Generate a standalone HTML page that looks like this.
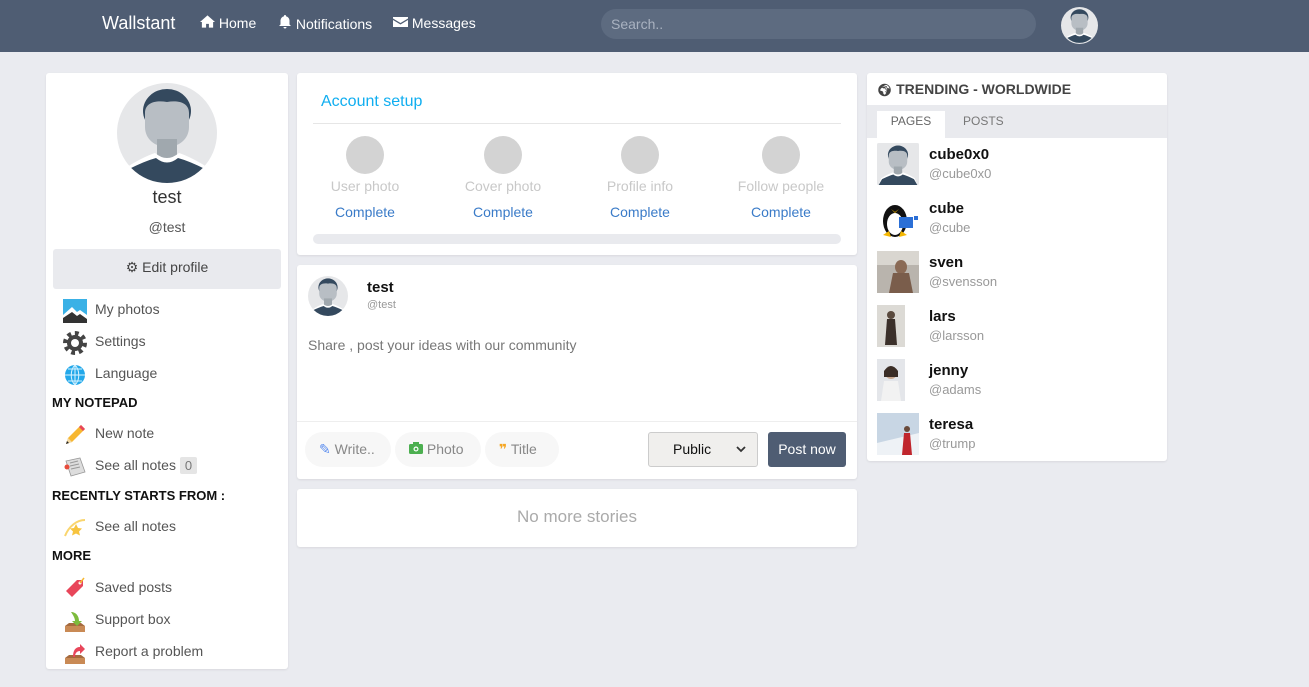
<!DOCTYPE html>
<html><head><meta charset="utf-8"><style>
*{box-sizing:border-box;margin:0;padding:0}
body{width:1309px;height:687px;background:#eaebf0;font-family:"Liberation Sans",sans-serif;position:relative;overflow:hidden;color:#555}
.a{position:absolute}
.nav{left:0;top:0;width:1309px;height:52px;background:#4f5d73}
.nav .t{color:#fff;font-size:14px;top:15px}
.card{background:#fff;border-radius:3px;box-shadow:0 1px 2px rgba(0,0,0,.08)}
.mi{font-size:14px;color:#555;left:49px}
.ic{left:17px;width:24px;height:24px}
.hd{font-size:13px;font-weight:bold;color:#111;left:6px}
.step{text-align:center;width:140px}
.step .c{width:38px;height:38px;border-radius:50%;background:#d3d3d3;margin:0 auto}
.step .l{color:#c8c8c8;font-size:14px;margin-top:4px}
.step .k{color:#3a7bc8;font-size:14px;margin-top:10px}
.pill{top:432px;height:35px;border-radius:18px;background:#f7f7f7;font-size:14px;color:#888;line-height:35px}
.tr .n{font-size:15px;font-weight:bold;color:#111}
.tr .u{font-size:13px;color:#999;margin-top:3px}
</style></head><body>
<svg width="0" height="0" style="position:absolute"><defs>
<g id="av"><ellipse cx="50" cy="28" rx="24" ry="22" fill="#34495e"/><path d="M28 30C28 20 38 17 50 19C62 17 72 20 72 30L72 44C72 56 62 64 50 64C38 64 28 56 28 44Z" fill="#b8bec4"/><rect x="40" y="56" width="20" height="20" fill="#a0a8ae"/><path d="M4 100L10 84Q26 74 38 70Q50 80 62 70Q74 74 90 84L96 100Z" fill="#fff"/><path d="M4 100L12 86Q28 78 39 75Q50 84 61 75Q72 78 88 86L96 100Z" fill="#34495e"/></g>
</defs></svg>
<div class="a nav">
<div class="a t" style="left:102px;font-size:18px;top:13px">Wallstant</div>
<div class="a t" style="left:200px"><svg width="15" height="13" viewBox="0 0 16 13"><path d="M8 0L0 7h2v6h4.5V9h3v4H14V7h2z" fill="#fff"/></svg> Home</div>
<div class="a t" style="left:278px"><svg width="14" height="14" viewBox="0 0 14 14"><path d="M7 0a1 1 0 0 1 1 1.2A4.5 4.5 0 0 1 11.5 6v3.5L13 11H1l1.5-1.5V6A4.5 4.5 0 0 1 6 1.2 1 1 0 0 1 7 0zM5.5 12h3a1.5 1.5 0 0 1-3 0z" fill="#fff"/></svg> Notifications</div>
<div class="a t" style="left:393px"><svg width="15" height="12" viewBox="0 0 15 12"><path d="M0 1h15v1.5L7.5 7 0 2.5zM0 4l7.5 4.5L15 4v7H0z" fill="#fff"/></svg> Messages</div>
<div class="a" style="left:601px;top:9px;width:435px;height:30px;border-radius:15px;background:#5d6b80;color:#a9b2c0;font-size:14px;line-height:30px;padding-left:10px">Search..</div>
<svg class="a" style="left:1061px;top:7px" width="37" height="37" viewBox="0 0 100 100"><circle cx="50" cy="50" r="50" fill="#e6e7e9"/><clipPath id="c0"><circle cx="50" cy="50" r="47"/></clipPath><g clip-path="url(#c0)"><use href="#av"/></g></svg>
</div>

<!-- left -->
<div class="a card" style="left:46px;top:73px;width:242px;height:596px">
<svg class="a" style="left:71px;top:10px" width="100" height="100" viewBox="0 0 100 100"><circle cx="50" cy="50" r="50" fill="#e6e7e9"/><clipPath id="c1"><circle cx="50" cy="50" r="50"/></clipPath><g clip-path="url(#c1)"><use href="#av"/></g></svg>
<div class="a" style="left:0;width:242px;top:114px;text-align:center;font-size:18px;color:#333">test</div>
<div class="a" style="left:0;width:242px;top:146px;text-align:center;font-size:14px;color:#555">@test</div>
<div class="a" style="left:7px;top:176px;width:228px;height:40px;background:#e9eaee;border-radius:3px;text-align:center;line-height:36px;font-size:14px;color:#444">⚙ Edit profile</div>
<svg class="a ic" style="top:226px" viewBox="0 0 24 24"><rect width="24" height="24" fill="#3ab1e6"/><path d="M0 24V16L9 8l5 5 3-2 7 5v8z" fill="#fff"/><path d="M0 24v-5l9-6 5 4 3-2 7 5v4z" fill="#333"/></svg>
<div class="a mi" style="top:228px">My photos</div>
<svg class="a ic" style="top:258px" viewBox="0 0 24 24"><circle cx="12" cy="12" r="9" fill="none" stroke="#444" stroke-width="6" stroke-dasharray="3.5 3.5"/><circle cx="12" cy="12" r="8" fill="#444"/><circle cx="12" cy="12" r="4" fill="#fff"/></svg>
<div class="a mi" style="top:260px">Settings</div>
<svg class="a ic" style="top:290px" viewBox="0 0 24 24"><circle cx="12" cy="12" r="10" fill="#23a8ea"/><path d="M2 12h20M12 2v20M5 6h14M5 18h14M12 2c-5 5-5 15 0 20M12 2c5 5 5 15 0 20" stroke="#d8f3ff" fill="none"/></svg>
<div class="a mi" style="top:292px">Language</div>
<div class="a hd" style="top:322px">MY NOTEPAD</div>
<svg class="a ic" style="top:350px" viewBox="0 0 24 24"><path d="M3 21l2-6L18 2l4 4L9 19z" fill="#f7b731"/><path d="M18 2l4 4-2 2-4-4z" fill="#e8465a"/><path d="M3 21l2-6 4 4z" fill="#f3d9a5"/><path d="M3 21l1-3 2 2z" fill="#222"/></svg>
<div class="a mi" style="top:352px">New note</div>
<svg class="a ic" style="top:382px" viewBox="0 0 24 24"><path d="M3 6l14-3 5 14-14 4z" fill="#ddd" stroke="#999" stroke-width=".8"/><path d="M7 8l8-2M7 11l9-2M8 14l9-2" stroke="#999"/><circle cx="4" cy="12" r="2.5" fill="#e74c3c"/></svg>
<div class="a mi" style="top:384px">See all notes <span style="background:#e5e5e5;color:#777;font-size:13px;padding:1px 5px;border-radius:2px">0</span></div>
<div class="a hd" style="top:415px">RECENTLY STARTS FROM :</div>
<svg class="a ic" style="top:443px" viewBox="0 0 24 24"><path d="M2 20C6 10 14 4 22 4" stroke="#f9d56e" stroke-width="2" fill="none"/><path d="M13 8l2 4 4 .5-3 3 1 4-4-2-4 2 1-4-3-3 4-.5z" fill="#f7c43f"/></svg>
<div class="a mi" style="top:445px">See all notes</div>
<div class="a hd" style="top:475px">MORE</div>
<svg class="a ic" style="top:504px" viewBox="0 0 24 24"><path d="M3 14L14 3h6v6L9 20z" fill="#e8465a"/><circle cx="17" cy="6" r="1.5" fill="#fff"/><path d="M17 6l4-5" stroke="#f7b731" stroke-width="1.5"/></svg>
<div class="a mi" style="top:506px">Saved posts</div>
<svg class="a ic" style="top:536px" viewBox="0 0 24 24"><path d="M2 17h20v6H2z" fill="#c98a55"/><path d="M2 17l4-3h12l4 3z" fill="#a56a3e"/><path d="M8 3c5 0 8 4 8 9h3l-5 5-5-5h3c0-3-2-6-4-9z" fill="#7dbb3c"/></svg>
<div class="a mi" style="top:538px">Support box</div>
<svg class="a ic" style="top:568px" viewBox="0 0 24 24"><path d="M2 17h20v6H2z" fill="#c98a55"/><path d="M2 17l4-3h12l4 3z" fill="#a56a3e"/><path d="M10 16c0-6 2-10 7-10V3l5 5-5 5v-3c-3 0-5 2-5 6z" fill="#e8465a"/></svg>
<div class="a mi" style="top:570px">Report a problem</div>
</div>

<!-- middle -->
<div class="a card" style="left:297px;top:73px;width:560px;height:182px">
<div class="a" style="left:24px;top:20px;font-size:16px;color:#10aef0">Account setup</div>
<div class="a" style="left:16px;top:50px;width:528px;height:1px;background:#e6e6e6"></div>
<div class="a step" style="left:-2px;top:63px"><div class="c"></div><div class="l">User photo</div><div class="k">Complete</div></div>
<div class="a step" style="left:136px;top:63px"><div class="c"></div><div class="l">Cover photo</div><div class="k">Complete</div></div>
<div class="a step" style="left:273px;top:63px"><div class="c"></div><div class="l">Profile info</div><div class="k">Complete</div></div>
<div class="a step" style="left:414px;top:63px"><div class="c"></div><div class="l">Follow people</div><div class="k">Complete</div></div>
<div class="a" style="left:16px;top:161px;width:528px;height:10px;border-radius:5px;background:#e9eaee"></div>
</div>

<div class="a card" style="left:297px;top:265px;width:560px;height:214px">
<svg class="a" style="left:11px;top:11px" width="40" height="40" viewBox="0 0 100 100"><circle cx="50" cy="50" r="50" fill="#e6e7e9"/><clipPath id="c2"><circle cx="50" cy="50" r="50"/></clipPath><g clip-path="url(#c2)"><use href="#av"/></g></svg>
<div class="a" style="left:70px;top:14px;font-size:15px;font-weight:bold;color:#111">test</div>
<div class="a" style="left:70px;top:34px;font-size:11px;color:#999">@test</div>
<div class="a" style="left:11px;top:72px;font-size:14px;color:#777">Share , post your ideas with our community</div>
<div class="a" style="left:0;top:156px;width:560px;height:1px;background:#eee"></div>
<div class="a pill" style="left:8px;top:167px;width:86px;padding-left:14px"><span style="color:#5b8def">✎</span> Write..</div>
<div class="a pill" style="left:98px;top:167px;width:86px;padding-left:14px"><svg width="14" height="12" viewBox="0 0 14 12"><rect y="2" width="14" height="10" rx="1.5" fill="#4caf50"/><rect x="4" y="0" width="6" height="3" fill="#4caf50"/><circle cx="7" cy="7" r="2.5" fill="#fff"/><circle cx="7" cy="7" r="1.3" fill="#4caf50"/></svg> Photo</div>
<div class="a pill" style="left:188px;top:167px;width:74px;padding-left:14px"><span style="color:#f5a623;font-weight:bold;font-family:'DejaVu Sans'">❞</span> Title</div>
<div class="a" style="left:351px;top:167px;width:110px;height:35px;border:1px solid #ccc;border-radius:3px;background:#f0efed;font-size:14px;color:#111;line-height:33px;padding-left:24px">Public<svg class="a" style="left:87px;top:13px" width="10" height="7" viewBox="0 0 10 7"><path d="M1 1l4 4 4-4" stroke="#333" stroke-width="1.8" fill="none"/></svg></div>
<div class="a" style="left:471px;top:167px;width:78px;height:35px;border-radius:3px;background:#4f5d73;color:#fff;font-size:14px;line-height:34px;text-align:center">Post now</div>
</div>

<div class="a card" style="left:297px;top:489px;width:560px;height:58px;text-align:center;line-height:55px;font-size:17px;color:#aaa">No more stories</div>

<!-- right -->
<div class="a card tr" style="left:867px;top:73px;width:300px;height:388px">
<div class="a" style="left:10px;top:8px;font-size:14px;font-weight:bold;color:#444"><span style="font-size:12px">🌍︎</span> TRENDING - WORLDWIDE</div>
<div class="a" style="left:0;top:32px;width:300px;height:33px;background:#e9eaee"></div>
<div class="a" style="left:10px;top:38px;width:68px;height:28px;background:#fff;font-size:12px;color:#666;text-align:center;line-height:20px">PAGES</div>
<div class="a" style="left:96px;top:41px;font-size:12px;color:#777">POSTS</div>
<svg class="a" style="left:10px;top:70px" width="42" height="42" viewBox="0 0 100 100"><rect width="100" height="100" rx="4" fill="#e6e7e9"/><use href="#av"/></svg>
<div class="a" style="left:62px;top:73px"><div class="n">cube0x0</div><div class="u">@cube0x0</div></div>
<svg class="a" style="left:10px;top:124px" width="42" height="42" viewBox="0 0 42 42"><rect width="42" height="42" fill="#fff"/><ellipse cx="18" cy="24" rx="12" ry="16" fill="#111"/><ellipse cx="18" cy="27" rx="8" ry="11" fill="#fff"/><path d="M14 12l4 3 4-3-4 4z" fill="#f5b700"/><path d="M6 38l6-4 2 6zM30 38l-6-4-2 6z" fill="#f5b700"/><rect x="22" y="20" width="14" height="11" fill="#2b6fd6"/><rect x="37" y="19" width="4" height="4" fill="#2b6fd6"/></svg>
<div class="a" style="left:62px;top:127px"><div class="n">cube</div><div class="u">@cube</div></div>
<svg class="a" style="left:10px;top:178px" width="42" height="42"><rect width="42" height="42" fill="#b9b4ad"/><rect x="0" y="0" width="42" height="14" fill="#d9d6d0"/><ellipse cx="24" cy="16" rx="6" ry="7" fill="#8a6a55"/><path d="M12 42l4-20h16l4 20z" fill="#7a5d4b"/></svg>
<div class="a" style="left:62px;top:181px"><div class="n">sven</div><div class="u">@svensson</div></div>
<svg class="a" style="left:10px;top:232px" width="28" height="42"><rect width="28" height="42" fill="#dcdad5"/><circle cx="14" cy="10" r="4" fill="#5a4a3e"/><path d="M8 40l2-26h8l2 26z" fill="#3b302a"/></svg>
<div class="a" style="left:62px;top:235px"><div class="n">lars</div><div class="u">@larsson</div></div>
<svg class="a" style="left:10px;top:286px" width="28" height="42"><rect width="28" height="42" fill="#e4e6ea"/><circle cx="14" cy="14" r="6" fill="#c9a88f"/><path d="M7 12q7-10 14 0v6H7z" fill="#3a2d26"/><path d="M4 42l3-20h14l3 20z" fill="#f2f2f2"/></svg>
<div class="a" style="left:62px;top:289px"><div class="n">jenny</div><div class="u">@adams</div></div>
<svg class="a" style="left:10px;top:340px" width="42" height="42"><rect width="42" height="42" fill="#c8d6e4"/><path d="M0 30L42 20v22H0z" fill="#eef2f6"/><path d="M25 42l2-22h6l2 22z" fill="#c0262d"/><circle cx="30" cy="16" r="3" fill="#6a4a3a"/></svg>
<div class="a" style="left:62px;top:343px"><div class="n">teresa</div><div class="u">@trump</div></div>
</div>
</body></html>
